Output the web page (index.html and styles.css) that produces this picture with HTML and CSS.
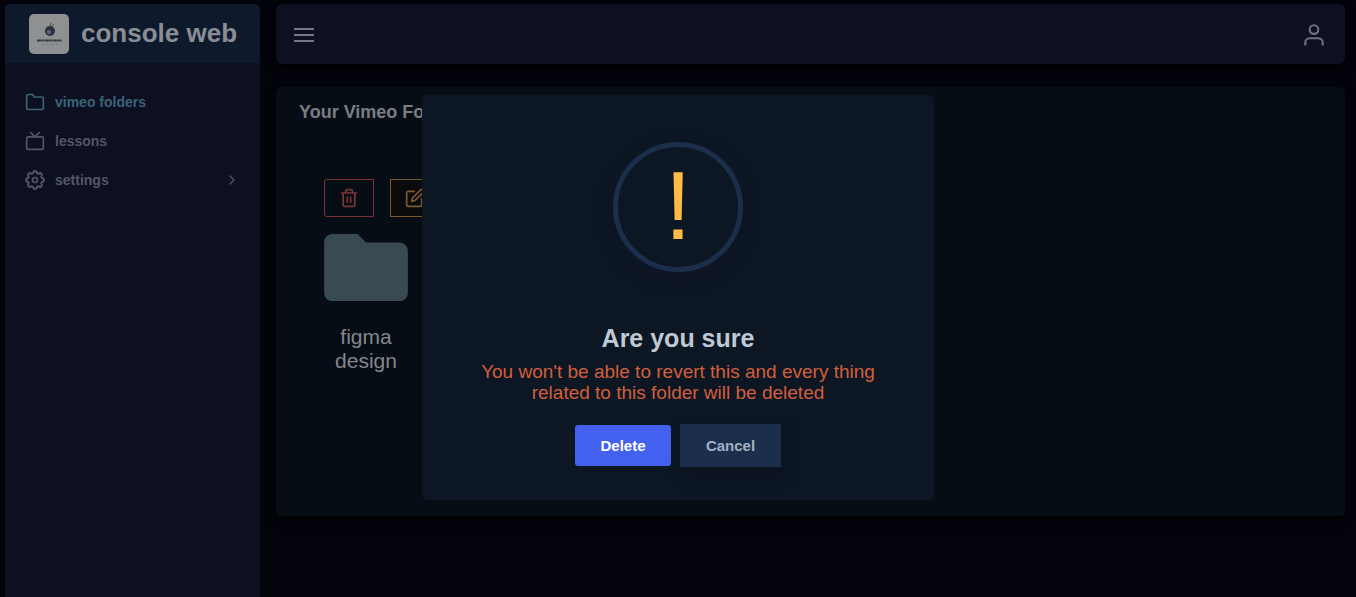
FILE: index.html
```
<!DOCTYPE html>
<html lang="en">
<head>
    <meta charset="UTF-8">
    <meta name="viewport" content="width=device-width, initial-scale=1.0">
    <title>console web</title>
    <link rel="stylesheet" href="styles.css">
</head>
<body>

    <div class="layout">
        <!-- Sidebar -->
        <aside class="sidebar">
            <a href="#" class="brand">
                <svg class="brand-logo" viewBox="0 0 40 40" aria-hidden="true">
                    <rect width="40" height="40" rx="5" fill="#8f9092"/>
                    <circle cx="21" cy="17" r="5" fill="#2c3140"/>
                    <circle cx="20" cy="18" r="2" fill="#5c6c88"/>
                    <path d="M21 12l1-3M23 12l2-2" stroke="#4c4a46" fill="none"/>
                    <path d="M8 26.500h25" stroke="#35373c" stroke-width="2" stroke-dasharray="4 .5 3 .6"/>
                    <path d="M12 30.500h17" stroke="#78807c" stroke-dasharray="2 .5"/>
                </svg>
                <span class="brand-name">console web</span>
            </a>
            <nav class="menu">
                <a href="#" class="menu-item active">
                    <svg class="icon" viewBox="0 0 24 24"><path d="M22 19a2 2 0 0 1-2 2H4a2 2 0 0 1-2-2V5a2 2 0 0 1 2-2h5l2 3h9a2 2 0 0 1 2 2z"/></svg>
                    <span>vimeo folders</span>
                </a>
                <a href="#" class="menu-item">
                    <svg class="icon" viewBox="0 0 24 24"><rect x="2" y="7" width="20" height="15" rx="2"/><path d="M17 2l-5 5-5-5"/></svg>
                    <span>lessons</span>
                </a>
                <a href="#" class="menu-item">
                    <svg class="icon" viewBox="0 0 24 24"><path d="M10.325 4.317c.426-1.756 2.924-1.756 3.350 0a1.724 1.724 0 0 0 2.573 1.066c1.543-.94 3.310.826 2.370 2.370a1.724 1.724 0 0 0 1.065 2.572c1.756.426 1.756 2.924 0 3.350a1.724 1.724 0 0 0-1.066 2.573c.94 1.543-.826 3.310-2.370 2.370a1.724 1.724 0 0 0-2.572 1.065c-.426 1.756-2.924 1.756-3.350 0a1.724 1.724 0 0 0-2.573-1.066c-1.543.94-3.310-.826-2.370-2.370a1.724 1.724 0 0 0-1.065-2.572c-1.756-.426-1.756-2.924 0-3.350a1.724 1.724 0 0 0 1.066-2.573c-.94-1.543.826-3.310 2.370-2.370 1 .608 2.296.07 2.572-1.065z" transform="translate(-2.400 -2.400) scale(1.200)"/><circle cx="12" cy="12" r="3"/></svg>
                    <span>settings</span>
                    <svg class="chevron" viewBox="0 0 24 24"><path d="M9 18l6-6-6-6"/></svg>
                </a>
            </nav>
        </aside>

        <main class="main">
            <!-- Top bar -->
            <header class="topbar">
                <button class="bar-btn" aria-label="Toggle menu">
                    <svg class="menu-icon" viewBox="0 0 20 14"><path d="M0 1h20M0 7h20M0 13h20"/></svg>
                </button>
                <button class="bar-btn" aria-label="Account">
                    <svg class="user-icon" viewBox="0 0 24 24"><path d="M20 21v-2a4 4 0 0 0-4-4H8a4 4 0 0 0-4 4v2"/><circle cx="12" cy="7" r="4"/></svg>
                </button>
            </header>

            <!-- Folders -->
            <section class="card">
                <h2 class="card-title">Your Vimeo Folders</h2>
                <div class="folders">
                    <div class="folder">
                        <div class="folder-actions">
                            <button class="action-btn delete" aria-label="Delete folder">
                                <svg viewBox="0 0 24 24"><path d="M3 6h18M19 6v14a2 2 0 0 1-2 2H7a2 2 0 0 1-2-2V6m3 0V4a2 2 0 0 1 2-2h4a2 2 0 0 1 2 2v2M10 11v6M14 11v6"/></svg>
                            </button>
                            <button class="action-btn edit" aria-label="Edit folder">
                                <svg viewBox="0 0 24 24"><path d="M11 4H4a2 2 0 0 0-2 2v14a2 2 0 0 0 2 2h14a2 2 0 0 0 2-2v-7"/><path d="M18.500 2.500a2.121 2.121 0 0 1 3 3L12 15l-4 1 1-4 9.500-9.500z"/></svg>
                            </button>
                        </div>
                        <svg class="folder-icon" viewBox="2 4 20 16" aria-hidden="true"><path d="M10 4H4c-1.100 0-2 .9-2 2v12c0 1.100.9 2 2 2h16c1.100 0 2-.9 2-2V8c0-1.100-.9-2-2-2h-8l-2-2z"/></svg>
                        <p class="folder-name">figma design</p>
                    </div>
                </div>
            </section>
        </main>
    </div>

    <!-- Delete confirmation -->
    <div class="overlay">
        <div class="modal" role="dialog" aria-modal="true" aria-labelledby="modalTitle">
            <div class="modal-icon"><span>!</span></div>
            <h2 class="modal-title" id="modalTitle">Are you sure</h2>
            <p class="modal-text">You won't be able to revert this and every thing related to this folder will be deleted</p>
            <div class="modal-actions">
                <button class="btn btn-delete">Delete</button>
                <button class="btn btn-cancel">Cancel</button>
            </div>
        </div>
    </div>

</body>
</html>
```
FILE: styles.css
```
* {
    margin: 0;
    padding: 0;
    box-sizing: border-box;
}

body {
    font-family: "Liberation Sans", Arial, sans-serif;
    background-color: #03030c;
    color: #85868c;
}

a {
    color: inherit;
    text-decoration: none;
}

button {
    font-family: inherit;
    border: none;
    background: none;
    color: inherit;
    cursor: pointer;
}

svg {
    display: block;
    flex-shrink: 0;
}

.layout {
    display: flex;
    gap: 16px;
    min-height: 100vh;
    padding: 4px 11px 0 5px;
}

/* Sidebar */
.sidebar {
    width: 255px;
    flex-shrink: 0;
    background-color: #0d1020;
    border-radius: 5px 5px 0 0;
    overflow: hidden;
}

.brand {
    display: flex;
    align-items: center;
    gap: 12px;
    height: 59px;
    padding: 0 20px 0 24px;
    background-color: #0e1a2b;
}

.brand-logo {
    width: 40px;
    height: 40px;
}

.brand-name {
    font-size: 26px;
    font-weight: bold;
    white-space: nowrap;
    color: #8a8d95;
}

.menu {
    display: flex;
    flex-direction: column;
    padding: 19px 20px 0;
}

.menu-item {
    display: flex;
    align-items: center;
    gap: 10px;
    height: 39px;
    font-size: 14px;
    font-weight: bold;
    color: #53566a;
}

.menu-item.active {
    color: #3a6476;
}

.icon,
.chevron,
.menu-icon,
.user-icon,
.action-btn svg {
    fill: none;
    stroke: currentColor;
    stroke-width: 2;
    stroke-linecap: round;
    stroke-linejoin: round;
}

.icon {
    width: 20px;
    height: 20px;
}

.chevron {
    width: 16px;
    height: 16px;
    margin-left: auto;
}

/* Top bar */
.main {
    flex: 1;
    min-width: 0;
}

.topbar {
    display: flex;
    align-items: center;
    justify-content: space-between;
    height: 60px;
    padding: 2px 18px 0;
    margin-bottom: 23px;
    background-color: #0d1020;
    border-radius: 6px;
    box-shadow: 0 4px 10px #000;
}

.menu-icon {
    width: 20px;
    height: 14px;
    stroke-linecap: butt;
    color: #75767e;
}

.user-icon {
    width: 26px;
    height: 26px;
    color: #6d7080;
}

/* Folders card */
.card {
    padding: 14px 23px 143px;
    background-color: #060d15;
    border-radius: 6px;
    box-shadow: 0 4px 10px #000;
}

.card-title {
    font-size: 18px;
    line-height: 22px;
    color: #7a7d82;
}

.folders {
    display: flex;
    padding: 56px 25px 0;
}

.folder {
    width: 116px;
}

.folder-actions {
    display: flex;
    gap: 16px;
    margin-bottom: 17px;
}

.action-btn {
    display: flex;
    align-items: center;
    justify-content: center;
    width: 50px;
    height: 38px;
    flex-shrink: 0;
    border: 1px solid;
}

.action-btn svg {
    width: 20px;
    height: 20px;
}

.action-btn.delete {
    color: #7b3533;
    border-radius: 3px 0 0 3px;
}

.action-btn.edit {
    color: #7c5a30;
    background-color: #0b0b0e;
}

.folder-icon {
    width: 84px;
    height: 67px;
    fill: #3a4a52;
}

.folder-name {
    width: 84px;
    margin-top: 24px;
    font-size: 21px;
    line-height: 24px;
    text-align: center;
}

/* Modal */
.overlay {
    position: fixed;
    inset: 0;
    display: flex;
    align-items: center;
    justify-content: center;
    padding-bottom: 2px;
}

.modal {
    display: flex;
    flex-direction: column;
    align-items: center;
    width: 512px;
    max-width: 100%;
    padding: 47px 48px 33px;
    background-color: #0d1623;
    border-radius: 5px;
}

.modal-icon {
    display: flex;
    align-items: center;
    justify-content: center;
    width: 130px;
    height: 130px;
    margin-bottom: 51px;
    padding-bottom: 2px;
    border: 5px solid #1b2e4b;
    border-radius: 50%;
    box-shadow: 0 6px 16px #0f1629;
    font-size: 96px;
    line-height: 118px;
    color: #ffbb44;
}

.modal-title {
    margin-bottom: 8px;
    font-size: 25px;
    line-height: 30px;
    color: #bfc9d4;
}

.modal-text {
    margin-bottom: 21px;
    font-size: 19px;
    line-height: 21px;
    text-align: center;
    color: #d35f3c;
}

.modal-actions {
    display: flex;
    align-items: center;
    gap: 9px;
}

.btn {
    padding-bottom: 1px;
    font-size: 15px;
    font-weight: bold;
}

.btn-delete {
    width: 96px;
    height: 41px;
    color: #fff;
    background-color: #4361ee;
    border-radius: 3px;
}

.btn-cancel {
    width: 101px;
    height: 43px;
    color: #a3b1c4;
    background-color: #1b2e4b;
    box-shadow: 4px 8px 14px #0b1220;
}
```
